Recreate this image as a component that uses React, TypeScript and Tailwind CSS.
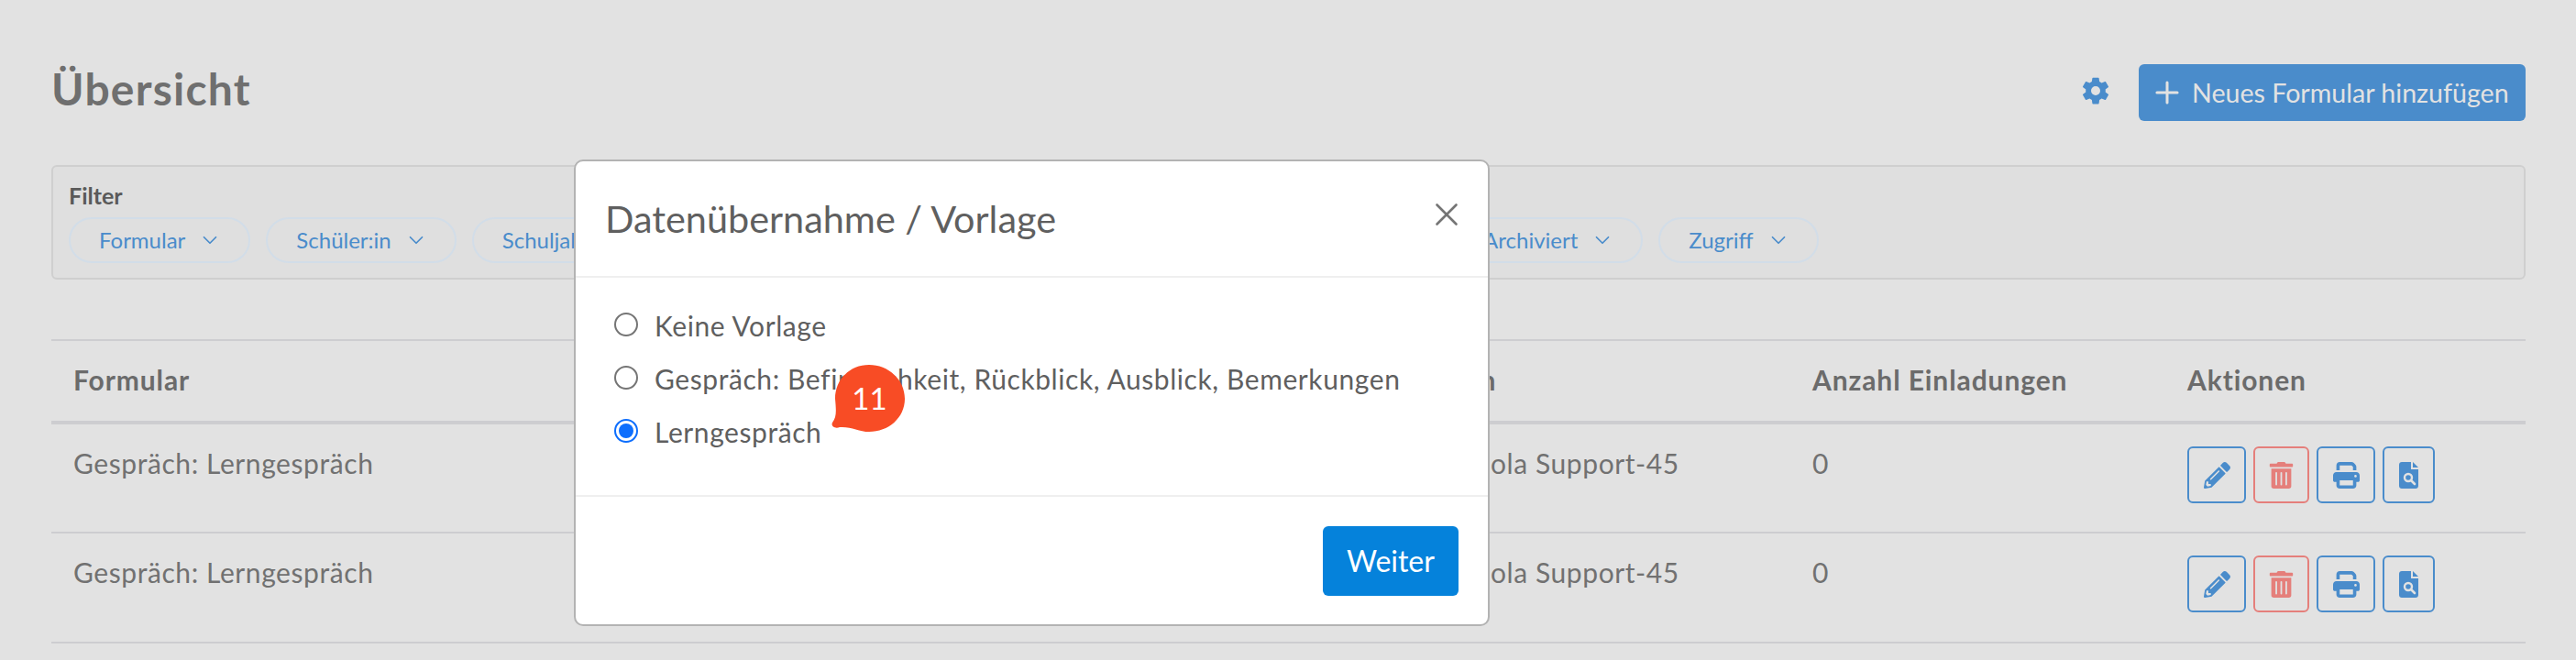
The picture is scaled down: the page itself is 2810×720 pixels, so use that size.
import React from "react";
import { ChevronDown, Plus, X } from "lucide-react";
import { FaPencilAlt, FaTrashAlt } from "react-icons/fa";
import { FaPrint } from "react-icons/fa6";
import { IoSettingsSharp } from "react-icons/io5";

const FILTERS = ["Formular", "Schüler:in", "Schuljahr", "Kurse", "Lehrperson", "Status", "Sichtbarkeit", "Archiviert", "Zugriff"];

const ROWS = [
  { form: "Gespräch: Lerngespräch", author: "Schola Support-45", invites: "0" },
  { form: "Gespräch: Lerngespräch", author: "Schola Support-45", invites: "0" },
];

const TEMPLATES = [
  { label: "Keine Vorlage", checked: false },
  { label: "Gespräch: Befindlichkeit, Rückblick, Ausblick, Bemerkungen", checked: false },
  { label: "Lerngespräch", checked: true },
];

function FilterChip({ label }: { label: string }) {
  return (
    <button className="flex h-[50px] items-center gap-[14px] rounded-full border-2 border-[#d2dde8] pl-[31px] pr-[29px] text-[24px] text-[#4a8ccb]">
      {label}
      <ChevronDown className="size-[26px]" strokeWidth={1.6} />
    </button>
  );
}

function FileSearchIcon() {
  return (
    <svg viewBox="0 0 21 29" className="h-[29px] w-[21px]" fill="currentColor">
      <path d="M3 0H13V8H21V26C21 27.7 19.7 29 18 29H3C1.3 29 0 27.7 0 26V3C0 1.3 1.3 0 3 0Z" />
      <path d="M15 0L21 6H15Z" />
      <circle cx="10" cy="17" r="4" fill="none" stroke="#e2e2e2" strokeWidth="2.4" />
      <path d="M13 20L17 24" stroke="#e2e2e2" strokeWidth="2.6" strokeLinecap="round" />
    </svg>
  );
}

function ActionButtons() {
  return (
    <div className="flex gap-[8px]">
      <button className="flex h-[62px] w-[64px] items-center justify-center rounded-[6px] border-2 border-[#4a8ccb] text-[#4a8ccb]">
        <FaPencilAlt className="size-[29px]" />
      </button>
      <button className="flex h-[62px] w-[61px] items-center justify-center rounded-[6px] border-2 border-[#e57f7b] text-[#e57f7b]">
        <FaTrashAlt className="size-[29px]" />
      </button>
      <button className="flex h-[62px] w-[64px] items-center justify-center rounded-[6px] border-2 border-[#4a8ccb] text-[#4a8ccb]">
        <FaPrint className="size-[29px]" />
      </button>
      <button className="flex h-[62px] w-[57px] items-center justify-center rounded-[6px] border-2 border-[#4a8ccb] text-[#4a8ccb]">
        <FileSearchIcon />
      </button>
    </div>
  );
}

export default function App() {
  return (
    <div className="relative h-[720px] w-full overflow-hidden bg-[#e2e2e2] pl-[56px] pr-[55px] pt-[70px] font-['Lato','Noto_Sans',sans-serif] text-[#717171]">
      {/* Header */}
      <div className="flex h-[62px] items-center justify-between">
        <h1 className="mb-[8px] text-[48px] font-bold tracking-[1.2px] text-[#6f6f6f]">Übersicht</h1>
        <div className="flex items-center gap-[31px]">
          <IoSettingsSharp className="mb-[4px] size-[32px] text-[#4a8ccb]" />
          <button className="flex h-[62px] w-[422px] items-center gap-[8px] rounded-[6px] bg-[#4a8ccb] pl-[12px] text-[28.6px] text-[#e2e2e2]">
            <Plus className="size-[38px]" strokeWidth={1.9} />
            Neues Formular hinzufügen
          </button>
        </div>
      </div>

      {/* Filter */}
      <div className="mt-[48px] h-[125px] rounded-[6px] border-2 border-[#cfcfcf] bg-[#dfdfdf] px-[17px] pt-[17px]">
        <div className="text-[25px] font-bold leading-[28px] text-[#5a5a5a]">Filter</div>
        <div className="mt-[10px] flex gap-[17px]">
          {FILTERS.map((f) => (
            <FilterChip key={f} label={f} />
          ))}
        </div>
      </div>

      {/* Table */}
      <table className="mt-[65px] w-full table-fixed border-t-2 border-[#cdcdd0] text-left text-[30px] tracking-[0.58px]">
        <colgroup>
          <col className="w-[1497px]" />
          <col className="w-[400px]" />
          <col className="w-[409px]" />
          <col />
        </colgroup>
        <thead>
          <tr className="h-[90px] border-b-4 border-[#cdcdd0]">
            <th className="px-[24px] pb-[2px] font-bold tracking-[0.9px] text-[#6b6b6b]">Formular</th>
            <th className="px-[24px] pb-[2px] font-bold tracking-[0.9px] text-[#6b6b6b]">Von</th>
            <th className="px-[24px] pb-[2px] font-bold tracking-[0.9px] text-[#6b6b6b]">Anzahl Einladungen</th>
            <th className="px-[24px] pb-[2px] font-bold tracking-[0.9px] text-[#6b6b6b]">Aktionen</th>
          </tr>
        </thead>
        <tbody>
          {ROWS.map((row, idx) => (
            <tr key={idx} className="h-[120px] border-b-2 border-[#cdcdd0] align-top">
              <td className="px-[24px] pt-[20px]">{row.form}</td>
              <td className="px-[24px] pt-[20px]">{row.author}</td>
              <td className="px-[24px] pt-[20px]">{row.invites}</td>
              <td className="px-[24px] pt-[24px]">
                <ActionButtons />
              </td>
            </tr>
          ))}
        </tbody>
      </table>

      {/* Modal */}
      <div className="absolute left-[626px] top-[174px] flex h-[509px] w-[999px] flex-col rounded-[10px] border-2 border-[#b3b3b3] bg-white text-[#5f5f5f]">
        <div className="flex h-[127px] shrink-0 items-center justify-between border-b-2 border-[#efefef] pl-[32px] pr-[24px]">
          <h2 className="text-[41.4px]">Datenübernahme / Vorlage</h2>
          <X className="mb-[10px] size-[42px] text-[#757575]" strokeWidth={1.5} />
        </div>
        <div className="flex flex-1 flex-col gap-[16px] border-b-2 border-[#efefef] pl-[42px] pt-[30px] text-[30px] tracking-[0.58px]">
          {TEMPLATES.map((t) => (
            <label key={t.label} className="flex h-[42px] items-center gap-[18px]">
              {t.checked ? (
                <span className="flex size-[26px] shrink-0 items-center justify-center rounded-full border-2 border-[#0d6efd]">
                  <span className="size-[16px] rounded-full bg-[#0d6efd]" />
                </span>
              ) : (
                <span className="size-[26px] shrink-0 rounded-full border-2 border-[#757575]" />
              )}
              <span className="mt-[3px]">{t.label}</span>
            </label>
          ))}
        </div>
        <div className="flex h-[139px] shrink-0 items-start justify-end pr-[32px] pt-[32px]">
          <button className="h-[76px] w-[148px] rounded-[6px] bg-[#0582db] text-[32px] text-white">Weiter</button>
        </div>
      </div>

      {/* Step badge */}
      <div className="absolute left-[907px] top-[398px] h-[73px] w-[80px]">
        <svg viewBox="0 0 80 73" className="size-full">
          <path
            d="M41 0C62 0 80 16 80 37C80 58 62 73 41 73C30 73 21 67 9 68C4 70 -1 67 1 63C6 57 5 49 4 37C4 16 20 0 41 0Z"
            fill="#f84c25"
          />
        </svg>
        <span className="absolute inset-0 flex items-center justify-center pl-[3px] text-[33px] text-white">11</span>
      </div>
    </div>
  );
}
